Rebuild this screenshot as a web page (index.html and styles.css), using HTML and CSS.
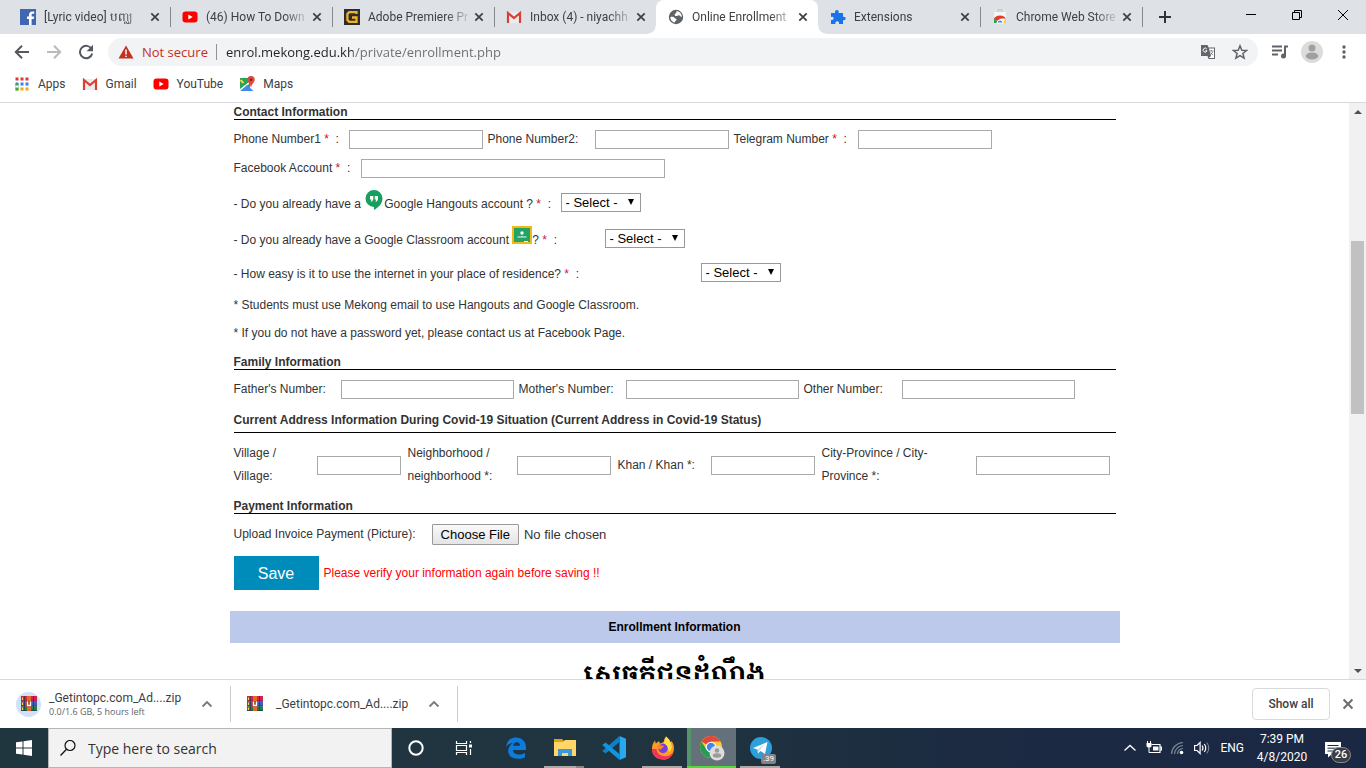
FILE: index.html
```html
<!DOCTYPE html>
<html lang="en">
<head>
<meta charset="utf-8">
<meta name="viewport" content="width=device-width, initial-scale=1">
<title>Online Enrollment</title>
<link rel="stylesheet" href="styles.css">
</head>
<body>
<svg class="sprite" aria-hidden="true">
  <symbol id="x" viewBox="0 0 10 10"><path d="M1.300 1.300 8.700 8.700M8.700 1.300 1.300 8.700" stroke="currentColor" stroke-width="1.700" fill="none"/></symbol>
  <symbol id="play" viewBox="0 0 16 16"><rect x=".5" y="2.500" width="15" height="11" rx="3" fill="#f00"/><path d="M6.300 5.500v5l4.400-2.500z" fill="#fff"/></symbol>
  <symbol id="mail" viewBox="0 0 16 16"><path d="M1 3h14v11H1z" fill="#ececec"/><path d="M2 14V4l6 5 6-5v10" fill="none" stroke="#d93f32" stroke-width="2.200"/></symbol>
  <symbol id="up" viewBox="0 0 12 12"><path d="M1.500 8.500 6 4l4.500 4.500" fill="none" stroke="currentColor" stroke-width="1.800"/></symbol>
  <symbol id="rar" viewBox="0 0 16 16"><path d="M0 0h16v5.500H0z" fill="#d8204f"/><path d="M0 5.500h16v5H0z" fill="#4a58bd"/><path d="M0 10.500h16V15H0z" fill="#128a3e"/><path d="M0 5h16M0 10h16M0 14.500h16" stroke="#353050" stroke-width=".7"/><path d="M3.500 0v15M12.500 0v15" stroke="#332c3c" stroke-width=".7"/><path d="M1.500 1.500v2.500M1.500 6.500v2.500M1.500 11.500v2.500" stroke="#f4da45"/><path d="M6 0h4v15H6z" fill="#df6a25"/><path d="M5 5h6v6H5z" fill="#a9412a"/><path d="M6.500 5.500v4h3v-4" stroke="#fff" stroke-width="1.300" fill="none"/></symbol>
</svg>

<header class="tabs">
  <div class="tab"><svg class="i16" viewBox="0 0 16 16"><path fill="#4267b2" d="M0 0h16v16H0z"/><path fill="#fff" d="M9 16V10H7V7.500h2V6c0-2.300 1.300-3.500 3.400-3.500h1.800v2.300h-1.300c-1 0-1.300.5-1.300 1.300v1.400h2.500L13.700 10h-2.100v6z"/></svg><span class="title">[Lyric video] បញ្ឈ</span><button class="close" aria-label="Close tab"><svg><use href="#x"/></svg></button></div>
  <div class="tab"><svg class="i16"><use href="#play"/></svg><span class="title">(46) How To Down</span><button class="close" aria-label="Close tab"><svg><use href="#x"/></svg></button></div>
  <div class="tab"><svg class="i16" viewBox="0 0 16 16"><path fill="#2e2d2c" d="M0 0h16v16H0z"/><path d="M12.500 5V3.200H5.200L3.400 5v6l1.800 1.900h7.300V8.500H8" fill="none" stroke="#efb229" stroke-width="2.300"/></svg><span class="title">Adobe Premiere Pr</span><button class="close" aria-label="Close tab"><svg><use href="#x"/></svg></button></div>
  <div class="tab plain"><svg class="i16"><use href="#mail"/></svg><span class="title">Inbox (4) - niyachh</span><button class="close" aria-label="Close tab"><svg><use href="#x"/></svg></button></div>
  <div class="tab active"><svg class="i16" viewBox="0 0 16 16"><circle cx="8" cy="8" r="7.200" fill="#5f6368"/><path d="M8.500 2.300C11.700 2.300 14 5 13.700 8c-1.200 0-1.500-1.800-3-1.800-1 0-1.500.8-2.700.8-1.500 0-2-1.500-.8-2.200 1-.6 1.300-1 1.300-2.500zM2.400 8c1.800-.5 3.600 0 4.400 1 .8.900 2 .8 1.700 2-.3 1-1.800 1-1.600 2.500C4.200 13.200 2.300 10.800 2.400 8z" fill="#fff"/></svg><span class="title">Online Enrollment</span><button class="close" aria-label="Close tab"><svg><use href="#x"/></svg></button></div>
  <div class="tab"><svg class="i16" viewBox="0 0 16 16"><path fill="#1a73e8" d="M1 4h4.200C4.500 2 5.600 1 6.900 1s2.300 1 1.700 3H13v4c1.800-.5 2.600.5 2.600 1.600S14.800 11.700 13 11.200V15H9c.4-1.800-.5-2.700-1.800-2.700S5 13.200 5.400 15H1v-4c1.700.3 2.600-.5 2.600-1.700S2.700 7.500 1 8z"/></svg><span class="title">Extensions</span><button class="close" aria-label="Close tab"><svg><use href="#x"/></svg></button></div>
  <div class="tab"><svg class="i16" viewBox="0 0 16 16"><path d="M6 3V1h4v2" fill="none" stroke="#c5c8cc" stroke-width="1.300"/><path fill="#f5f5f5" d="M2 3h12v11H2z"/><path d="M2 14V8.500L5 12v2z" fill="#25a65a"/><path d="M14 14V8.500L11 14z" fill="#fdd22e"/><path d="M2.200 9.500C4 5.500 12 5.500 13.800 9.500H9L5 12z" fill="#e33b2e"/><path d="M5 14a3 3 0 0 1 6 0z" fill="#4688f1" stroke="#fff"/></svg><span class="title">Chrome Web Store</span><button class="close" aria-label="Close tab"><svg><use href="#x"/></svg></button></div>
  <button class="newtab" aria-label="New tab"><svg viewBox="0 0 12 12"><path d="M6 0v12M0 6h12" stroke="#303336" stroke-width="2"/></svg></button>
  <div class="winbtns">
    <button aria-label="Minimize"><svg viewBox="0 0 10 10"><path d="M0 4.500h10" stroke="#000"/></svg></button>
    <button aria-label="Restore"><svg viewBox="0 0 10 10"><path d="M.5 2.500h7v7h-7zM2.500 2.500v-2h7v7h-2" fill="none" stroke="#000"/></svg></button>
    <button aria-label="Close"><svg viewBox="0 0 10 10"><path d="m0 0 10 10M10 0 0 10" stroke="#000"/></svg></button>
  </div>
</header>

<nav class="toolbar">
  <button class="tool" aria-label="Back"><svg viewBox="0 0 16 16"><path d="M15 8H2.500M8 1.800 1.800 8 8 14.200" fill="none" stroke="#55585c" stroke-width="2"/></svg></button>
  <button class="tool" aria-label="Forward"><svg viewBox="0 0 16 16"><path d="M1 8h12.500M8 1.800 14.200 8 8 14.200" fill="none" stroke="#b9bbbe" stroke-width="2"/></svg></button>
  <button class="tool" aria-label="Reload"><svg viewBox="0 0 16 16"><path d="M13.600 5A6.200 6.200 0 1 0 14.200 9.500" fill="none" stroke="#55585c" stroke-width="2"/><path d="M15 .8v6.400H8.600z" fill="#55585c"/></svg></button>
  <div class="omnibox">
    <svg class="warn" viewBox="0 0 15 14"><path d="M7.500.5 15 13.500H0z" fill="#c5301f"/><path d="M7.500 4.500v5M7.500 10.800v1.300" stroke="#fff" stroke-width="1.500"/></svg>
    <span class="insecure">Not secure</span>
    <input class="url" aria-label="Address" value="enrol.mekong.edu.kh/private/enrollment.php">
    <button class="tool" aria-label="Translate"><svg viewBox="0 0 16 16"><path d="M1 1h6.500l1 2.500h6.500V15H8.500l-1-3H1z" fill="#62666a"/><path d="M9 4.500h5V14H8.800l2.200-2z" fill="#fff"/><path d="M9.500 7h4M11.500 6v1M12.800 7.500c-.5 1.500-1.500 2.600-2.700 3.400M10.600 8.500l2.400 2.700" stroke="#777" fill="none" stroke-width=".8"/><path d="M6.800 5A2 2 0 1 0 7 6.800H5.300" fill="none" stroke="#fff"/></svg></button>
    <button class="tool" aria-label="Bookmark"><svg viewBox="0 0 16 16"><path d="m8 1.800 1.800 4.400 4.700.3-3.600 3 1.200 4.600L8 11.600l-4.100 2.500 1.200-4.600-3.600-3 4.700-.3z" fill="none" stroke="#5f6368" stroke-width="1.500"/></svg></button>
  </div>
  <button class="tool" aria-label="Playlist"><svg viewBox="0 0 16 16"><path d="M0 2.500h10M0 6.500h10M0 10.500h6M16 2.500h-3v9" fill="none" stroke="#5f6368" stroke-width="2"/><circle cx="11.500" cy="12" r="2.500" fill="#5f6368"/></svg></button>
  <button class="tool" aria-label="Profile"><svg class="avatar" viewBox="0 0 22 22"><circle cx="11" cy="11" r="11" fill="#dcdcdc"/><circle cx="11" cy="7" r="3.500" fill="#a0a0a0"/><ellipse cx="11" cy="15" rx="6.300" ry="3.500" fill="#a0a0a0"/></svg></button>
  <button class="tool" aria-label="Menu"><svg viewBox="0 0 16 16"><g fill="#5f6368"><circle cx="8" cy="3" r="1.700"/><circle cx="8" cy="8" r="1.700"/><circle cx="8" cy="13" r="1.700"/></g></svg></button>
</nav>

<nav class="bookmarks">
  <a href="#"><svg class="i16" viewBox="0 0 16 16"><path d="M1.500 3h13" stroke="#e0372b" stroke-width="3" stroke-dasharray="3 2"/><path d="M1.500 8h13" stroke="#3f7fe8" stroke-width="3" stroke-dasharray="3 2"/><path d="M1.500 13h13" stroke="#f0a912" stroke-width="3" stroke-dasharray="3 2"/><path d="M1.500 8h3v6.500h-3z" fill="#35a853"/><path d="M1.500 9.500h3v2h-3z" fill="#fff"/></svg>Apps</a>
  <a href="#"><svg class="i16"><use href="#mail"/></svg>Gmail</a>
  <a href="#"><svg class="i16"><use href="#play"/></svg>YouTube</a>
  <a href="#"><svg class="i16" viewBox="0 0 16 16"><path d="M1 2h10v13H1z" fill="#28a45a"/><path d="M1 13V15l9-7V6z" fill="#fff"/><path d="m2 15 6-6 6.500 6z" fill="#4688f1"/><path d="m1.500 4 3 3" stroke="#fbd13e" stroke-width="2"/><path d="M12 0a3.700 3.700 0 0 1 3.700 3.700C15.700 6.500 12.500 7.500 12 12c-.5-4.500-3.700-5.500-3.700-8.300A3.700 3.700 0 0 1 12 0z" fill="#df4a3d"/><circle cx="12" cy="3.800" r="1.300" fill="#7e2920"/></svg>Maps</a>
</nav>

<div class="viewport">
  <main class="page">
    <form class="form">
      <h2>Contact Information</h2>
      <div class="row">
        <label class="w110" for="p1">Phone Number1 <i>*</i>&nbsp; :</label><input id="p1" class="f134" type="text">
        <label class="w102" for="p2">Phone Number2:</label><input id="p2" class="f134" type="text">
        <label class="w119" for="tg">Telegram Number <i>*</i>&nbsp; :</label><input id="tg" class="f134" type="text">
      </div>
      <div class="row">
        <label class="w122" for="fb">Facebook Account <i>*</i>&nbsp; :</label><input id="fb" class="f304" type="text">
      </div>
      <div class="ask first">
        <label class="w322" for="s1">- Do you already have a <svg class="brand" viewBox="0 0 20 20"><path d="M10 0a8.500 8.500 0 0 1 8.500 8.500c0 5-4 9-8.500 11.500v-3A8.500 8.500 0 0 1 10 0z" fill="#17a05d"/><path d="M6 6h3.300v3.500L8 11.500H6.700l.8-2H6zM10.800 6H14v3.500l-1.200 2h-1.300l.7-2h-1.400z" fill="#fff"/></svg>Google Hangouts account ? <i>*</i>&nbsp; :</label>
        <span class="pick"><select id="s1"><option>- Select -</option></select></span>
      </div>
      <div class="ask second">
        <label class="w366" for="s2">- Do you already have a Google Classroom account <svg class="brand" viewBox="0 0 20 20"><path d="M0 0h20v18H0z" fill="#f4b814"/><path d="M2 2h16v14H2z" fill="#21a465"/><circle cx="10" cy="7" r="1.700" fill="#fff"/><path d="M5 11.500c1-1.500 2-1.500 3-.8 1-.8 3-.8 4 0 1-.7 2-.7 3 .8z" fill="#d9f1e4"/><path d="M12 15h4v1h-4z" fill="#fff"/></svg>? <i class="pink">*</i>&nbsp; :</label>
        <span class="pick"><select id="s2"><option>- Select -</option></select></span>
      </div>
      <div class="ask">
        <label class="w462" for="s3">- How easy is it to use the internet in your place of residence? <i class="pink">*</i>&nbsp; :</label>
        <span class="pick"><select id="s3"><option>- Select -</option></select></span>
      </div>
      <p>* Students must use Mekong email to use Hangouts and Google Classroom.</p>
      <p>* If you do not have a password yet, please contact us at Facebook Page.</p>
      <h2>Family Information</h2>
      <div class="row">
        <label class="w102" for="fa">Father's Number:</label><input id="fa" class="f173" type="text">
        <label class="w102" for="mo">Mother's Number:</label><input id="mo" class="f173" type="text">
        <label class="w93" for="ot">Other Number:</label><input id="ot" class="f173" type="text">
      </div>
      <h2 class="roomy">Current Address Information During Covid-19 Situation (Current Address in Covid-19 Status)</h2>
      <div class="address">
        <label for="vi">Village / Village:</label><input id="vi" type="text">
        <label for="ne">Neighborhood / neighborhood *:</label><input id="ne" type="text">
        <label for="kh">Khan / Khan *:</label><input id="kh" type="text">
        <label for="ci">City-Province / City-Province *:</label><input id="ci" type="text">
      </div>
      <h2>Payment Information</h2>
      <div class="row upload">
        <label for="up">Upload Invoice Payment (Picture):</label><input id="up" type="file">
      </div>
      <div class="row submit">
        <button class="save" type="button">Save</button><span class="alert">Please verify your information again before saving !!</span>
      </div>
    </form>
    <h3 class="band">Enrollment Information</h3>
    <div class="khmer" lang="km">សេចក្តីជូនដំណឹង</div>
  </main>
  <div class="scroll"><span class="arrow top"></span><span class="before"></span><span class="thumb"></span><span class="after"></span><span class="arrow bottom"></span></div>
</div>

<section class="downloads">
  <div class="item"><span class="ring"><svg class="i16"><use href="#rar"/></svg></span><div class="file">_Getintopc.com_Ad....zip<small>0.0/1.6 GB, 5 hours left</small></div><button aria-label="Options"><svg><use href="#up"/></svg></button></div>
  <div class="item"><svg class="i16"><use href="#rar"/></svg><div class="file">_Getintopc.com_Ad....zip</div><button aria-label="Options"><svg><use href="#up"/></svg></button></div>
  <button class="showall">Show all</button>
  <button class="shut" aria-label="Close downloads"><svg><use href="#x"/></svg></button>
</section>

<footer class="taskbar">
  <button class="start" aria-label="Start"><svg class="i16" viewBox="0 0 16 16"><path d="M0 2.300 6.500 1.400v6.100H0zM7.500 1.200 16 0v7.500H7.500zM0 8.500h6.500v6.100L0 13.700zM7.500 8.500H16V16l-8.500-1.200z" fill="#fff"/></svg></button>
  <label class="search"><svg class="i16" viewBox="0 0 16 16"><circle cx="10" cy="5.500" r="5" fill="none" stroke="#111" stroke-width="1.200"/><path d="M6.500 9.300.5 15.500" stroke="#111" stroke-width="1.300"/></svg><input aria-label="Search" placeholder="Type here to search"></label>
  <button class="sys" aria-label="Cortana"><svg viewBox="0 0 20 20"><circle cx="10" cy="10" r="6.700" fill="none" stroke="#fff" stroke-width="2"/></svg></button>
  <button class="sys" aria-label="Task view"><svg viewBox="0 0 20 20"><path d="M2.500 3v2.500h10V3M2.500 17v-2.500h10V17M2.500 7.500h10v5h-10zM16.500 3v2M16.500 11v6" fill="none" stroke="#fff" stroke-width="1.200"/><path d="M15 6.500h3v3h-3z" fill="#fff"/></svg></button>
  <button class="app" aria-label="Edge"><svg viewBox="0 0 24 24"><path d="M2 11C3 4 7 1.500 12 1.500c6.500 0 10 4.500 10 10V14H9c.2 3.400 3 4.500 6.200 4.500 2.400 0 4.300-.6 5.800-1.500v4.300c-2 1-4.300 1.500-7 1.500-6 0-9.800-3-9.800-8 0-3.500 1.900-6.200 4.800-7.800C5.500 7.500 3.300 9 2 11zm7.200-1.200H16c0-2.400-1.100-3.600-3.200-3.600-2 0-3.300 1.500-3.600 3.600z" fill="#0b7bdd"/></svg></button>
  <button class="app open stack" aria-label="File Explorer"><svg viewBox="0 0 24 24"><path d="M1 3h8l2 2h12v5H1z" fill="#e2a10d"/><path d="M1 6h9l2-2h11v16H1z" fill="#ffd667"/><path d="M5 20v-7h14v7h-4v-3H9v3z" fill="#3a96dd"/></svg></button>
  <button class="app" aria-label="Visual Studio Code"><svg viewBox="0 0 24 24"><path d="M17.500 0 24 2.800v18.400L17.500 24z" fill="#27a9f2"/><path d="M17.500 0v6L3.600 17.600.2 15z" fill="#0f7fc8"/><path d="M.2 9 3.600 6.400 17.500 18v6z" fill="#1693dd"/></svg></button>
  <button class="app open" aria-label="Firefox"><svg viewBox="0 0 24 24"><path d="M15 .5c2 2 3.500 3 4.300 5.500l1.500-.8c2 3 2.500 5.500 2 9C22 20 17.700 23.500 12 23.500S1 19.500 1 13c0-3.500 1-6.500 3-8.500l.8 3L8 5l1 2.500c2-1 4.500-1 4-4z" fill="#ff9a22"/><path d="M15 .5c2 2 3.500 3 4.300 5.500 2 3 2 8-1.300 10-1-6-4-7-5-9z" fill="#ffe04a"/><path d="M1 13c0 6.500 5.300 10.500 11 10.500 5 0 9-2.500 10.400-7.500-3 4-8 5-12 3.500-3-1.200-4.500-3.500-5-6.500z" fill="#f6315b"/><circle cx="12" cy="12.500" r="4.700" fill="#7540d9"/><path d="M6 10c3-1.500 5 0 7 0-.5 2-2.500 1.500-3 3.500-2 .5-4-1.500-4-3.500z" fill="#ff812f"/></svg></button>
  <button class="app open current" aria-label="Chrome"><svg viewBox="0 0 26 26"><circle cx="12" cy="12" r="11" fill="#fcc934"/><path d="M12 12 2.500 6.500A11 11 0 0 1 21.500 6.500H12z" fill="#e0483c"/><path d="M2.500 6.500A11 11 0 0 0 12 23l4.500-8.500L12 12 7.300 14.500z" fill="#249c54"/><circle cx="12" cy="12" r="5.300" fill="#fff"/><circle cx="12" cy="12" r="4.200" fill="#4385f1"/><circle cx="18" cy="18" r="7.500" fill="#dedede"/><circle cx="18" cy="15.500" r="2.300" fill="#9b9b9b"/><ellipse cx="18" cy="20.500" rx="4.200" ry="2.200" fill="#9b9b9b"/></svg></button>
  <button class="app open" aria-label="Telegram"><svg viewBox="0 0 24 24"><circle cx="12" cy="12" r="11" fill="#2ba0da"/><path d="m4 12 14.500-6L16 18l-4.500-3-2.500 2.500-.5-4z" fill="#fff"/><path d="m8.500 13.500 8-6-6 7-1.500 3z" fill="#c8daea"/></svg><span class="count">.39</span></button>
  <div class="tray">
    <svg class="i16" viewBox="0 0 16 16"><path d="m2.500 10.500 5.500-5 5.500 5" fill="none" stroke="#fff" stroke-width="1.300"/></svg>
    <svg class="i16" viewBox="0 0 16 16"><path d="M5.500 4.500h8.500v8H4.500M14.500 7h1v3h-1" fill="none" stroke="#fff" stroke-width="1.200"/><path d="M7 6.500h5.500v4H7zM.5 3h5v3.500l-1.500 1H2l-1.500-1z" fill="#fff"/><path d="M1.500 1v2M4.500 1v2M3 7v5.500h2" stroke="#fff" fill="none"/></svg>
    <svg class="i16" viewBox="0 0 16 16"><g fill="none" stroke="#7d8794" stroke-width="1.200"><path d="M1.500 14A12 12 0 0 1 13 2.500M4.500 14A9 9 0 0 1 13 5.500M7.500 14A6 6 0 0 1 13 8.500"/></g><circle cx="11.500" cy="12.500" r="1.800" fill="#fff"/></svg>
    <svg class="i16" viewBox="0 0 16 16"><path d="M.6 5.500h2.500l3-3v11l-3-3H.6zM8 5.500q2 2.500 0 5M10.300 4q3 4 0 8" fill="none" stroke="#fff" stroke-width="1.200"/><path d="M12.800 2.500q4 5.500 0 11" fill="none" stroke="#8992a0"/></svg>
    <span class="lang">ENG</span>
    <div class="clock">7:39 PM<br>4/8/2020</div>
    <button class="notes" aria-label="Notifications"><svg viewBox="0 0 18 18"><path d="M1 1h16v12H8l-4 3.500V13H1z" fill="#fff"/><path d="M3.500 4.500h11M3.500 7.200h11M3.500 10h8" stroke="#1c2a42"/></svg><span>26</span></button>
  </div>
</footer>
</body>
</html>
```

FILE: styles.css
```css
* { box-sizing: border-box; }
body {
  margin: 0;
  height: 100vh;
  display: flex;
  flex-direction: column;
  overflow: hidden;
  background: #fff;
  font: 12px/16px Roboto, "Noto Sans", sans-serif;
  color: #3c4043;
}
button { border: 0; padding: 0; background: none; font: inherit; color: inherit; }
input { min-width: 0; }
svg { flex: none; }
.sprite { position: absolute; width: 0; height: 0; }
.i16 { width: 16px; height: 16px; }

/* Tab strip */
.tabs { display: flex; flex: none; height: 34px; padding-left: 8px; background: #dee1e6; }
.tab {
  position: relative;
  display: flex;
  align-items: center;
  flex: 0 1 162px;
  min-width: 0;
  padding: 0 7px 0 12px;
}
.tab::after {
  content: "";
  position: absolute;
  right: -1px;
  top: 7px;
  height: 20px;
  border-right: 1px solid #85888c;
}
.tab.plain::after { display: none; }
.title {
  flex: 1;
  margin: 0 3px 0 8px;
  overflow: hidden;
  white-space: nowrap;
  -webkit-mask-image: linear-gradient(90deg, #000 78px, transparent 104px);
  mask-image: linear-gradient(90deg, #000 78px, transparent 104px);
}
.close { display: flex; padding: 3px; }
.close svg { width: 10px; height: 10px; }
.tab.active { background: #fff; border-radius: 8px 8px 0 0; }
.tab.active::before, .tab.active::after {
  content: "";
  position: absolute;
  top: auto;
  bottom: 0;
  width: 8px;
  height: 8px;
  border: 0;
}
.tab.active::before { left: -8px; background: radial-gradient(circle at 0 0, #dee1e6 7px, #fff 8px); }
.tab.active::after { right: -8px; background: radial-gradient(circle at 100% 0, #dee1e6 7px, #fff 8px); }
.newtab { width: 46px; display: grid; place-items: center; }
.newtab svg { width: 12px; height: 12px; }
.winbtns { display: flex; margin-left: auto; height: 29px; }
.winbtns button { width: 46px; display: grid; place-items: center; }
.winbtns svg { width: 10px; height: 10px; }

/* Toolbar */
.toolbar { display: flex; flex: none; align-items: center; gap: 4px; height: 36px; padding: 0 8px; }
.tool { width: 28px; height: 28px; display: grid; place-items: center; }
.tool svg { width: 16px; height: 16px; }
.tool .avatar { width: 22px; height: 22px; }
.omnibox {
  flex: 1;
  display: flex;
  align-items: center;
  gap: 4px;
  height: 28px;
  margin: 0 4px;
  padding: 0 4px 0 10px;
  border-radius: 14px;
  background: #f1f3f4;
  font: 13px/16px "Open Sans", "Noto Sans", sans-serif;
}
.warn { width: 16px; height: 14px; }
.insecure { margin-left: 4px; padding-right: 8px; border-right: 1px solid #909396; color: #c5301f; white-space: nowrap; }
.url {
  flex: 1;
  height: 22px;
  border: 0;
  padding: 0 0 0 5px;
  font: inherit;
  color: transparent;
  background: linear-gradient(90deg, #202124 132px, #696d71 132px);
  -webkit-background-clip: text;
  background-clip: text;
}
.bookmarks { display: flex; flex: none; align-items: center; gap: 16px; height: 33px; padding: 0 14px 5px; border-bottom: 1px solid #d8d9dc; }
.bookmarks a { display: flex; align-items: center; gap: 8px; color: inherit; text-decoration: none; }

/* Page */
.viewport { flex: 1; min-height: 0; display: flex; overflow: hidden; font-family: "Liberation Sans", Arial, sans-serif; color: #333; }
.page { width: 100%; max-width: 890px; margin: 0 auto; }
.form { padding: 1px 4px 0; }
h2 { margin: 0; padding-top: 2px; border-bottom: 1px solid #000; font-size: 12px; line-height: 13px; }
.row { display: flex; align-items: center; gap: 5px; padding: 10px 0 9px; line-height: 19px; }
.row + .row { padding-top: 1px; }
input[type="text"] { height: 19px; border: 1px solid #a9a9a9; background: #fff; }
i { color: #c8141e; font-style: normal; }
.pink { color: #c2185b; }
.w93 { width: 93px; }
.w102 { width: 102px; }
.w110 { width: 110px; }
.w119 { width: 119px; }
.w122 { width: 122px; }
.w322 { width: 322px; }
.w366 { width: 366px; }
.w462 { width: 462px; }
.f134 { width: 134px; }
.f173 { width: 173px; }
.f304 { width: 304px; }
.ask { display: flex; align-items: end; gap: 5px; height: 34px; padding-bottom: 6px; white-space: nowrap; }
.ask.first { height: 31px; }
.ask.second { height: 36px; }
.brand { width: 20px; height: 20px; vertical-align: -2px; }
.pick { position: relative; display: block; height: 19px; }
.pick::after {
  content: "";
  position: absolute;
  right: 7px;
  top: 6px;
  border: solid transparent;
  border-width: 6px 3px 0;
  border-top-color: #000;
}
select {
  appearance: none;
  width: 80px;
  height: 19px;
  padding: 0 4px;
  border: 1px solid #999;
  border-radius: 0;
  background: #fff;
  font: 13px/17px "Liberation Sans", Arial, sans-serif;
  color: #000;
}
p { margin: 0; line-height: 28px; }
p:nth-last-of-type(2) { padding-top: 3px; }
p:last-of-type { padding-bottom: 7px; }
.roomy { padding-top: 0; line-height: 24px; }
.address {
  display: grid;
  grid-template-columns: 76px 84px 102px 94px 86px 104px 147px 134px;
  column-gap: 7px;
  align-items: center;
  padding: 9px 0 10px;
  line-height: 23px;
}
.upload { gap: 16px; padding-bottom: 11px; line-height: 21px; }
input[type="file"] { font-size: 13px; color: #333; }
input[type="file"]::file-selector-button {
  height: 21px;
  margin-right: 5px;
  padding: 0 8px;
  border: 1px solid #999;
  border-radius: 1px;
  background: linear-gradient(#fafafa, #e4e4e4);
  font: 13px "Liberation Sans", Arial, sans-serif;
}
.save { width: 85px; height: 34px; background: #008cba; color: #fff; font-size: 16px; }
.alert { color: #f00; }
.row.submit { padding: 0 0 21px; }
.band { margin: 0; background: #bdc9ea; color: #000; font-size: 12px; line-height: 32px; text-align: center; }
.khmer { padding-top: 14px; font: bold 26px/34px "Khmer OS Muol", "Noto Serif Khmer", sans-serif; text-align: center; color: #000; white-space: nowrap; }

.scroll { flex: none; width: 17px; display: flex; flex-direction: column; align-items: center; background: #f1f1f1; }
.arrow { height: 17px; display: grid; place-items: center; }
.arrow::before { content: ""; border: 4px solid transparent; }
.top::before { border-bottom-color: #505050; border-top: 0; }
.bottom::before { border-top-color: #505050; border-bottom: 0; }
.before { flex: 121; }
.thumb { flex: 174; width: 13px; background: #c1c1c1; }
.after { flex: 248; }

/* Download shelf */
.downloads { display: flex; flex: none; align-items: center; height: 49px; padding-right: 12px; border-top: 1px solid #d8d9dc; }
.item { display: flex; align-items: center; height: 36px; padding-left: 16px; border-right: 1px solid #ccc; }
.item > .i16 { margin-right: 5px; }
.ring { display: grid; place-items: center; width: 25px; height: 25px; border-radius: 50%; background: #d0e1fa; }
.file { margin-left: 8px; width: 144px; line-height: 15px; white-space: nowrap; }
.file small { display: block; font: 9px/12px "Open Sans", sans-serif; color: #5f6368; }
.item button { width: 37px; padding: 0 8px; display: flex; color: #77797c; }
.item button svg { width: 12px; height: 12px; }
.showall { width: 78px; height: 32px; margin: 0 12px 0 auto; border: 1px solid #d8dade; border-radius: 4px; font-weight: 500; }
.shut { display: flex; color: #6b6e72; }
.shut svg { width: 12px; height: 12px; }

/* Taskbar */
.taskbar { display: flex; flex: none; height: 40px; background: linear-gradient(90deg, #20363f, #20343f 50%, #1b2942 75%, #1b2844); color: #fff; }
.start { width: 48px; display: grid; place-items: center; }
.search { flex: 0 1 344px; display: flex; align-items: center; gap: 12px; padding: 0 11px; border: 1px solid #b5b5b5; background: #f2f2f2; }
.search input { flex: 1; border: 0; padding: 0; background: none; font: 14px "Open Sans", sans-serif; }
.search input::placeholder { color: #333; opacity: 1; }
.sys { width: 48px; display: grid; place-items: center; }
.sys svg { width: 20px; height: 20px; }
.app { position: relative; width: 49px; display: grid; place-items: center; }
.sys + .app { margin-left: 3px; }
.app svg { width: 24px; height: 24px; }
.open::after { content: ""; position: absolute; left: 4px; right: 5px; bottom: 0; height: 2px; background: #aaa9a6; }
.stack::after { border-right: 8px solid #858583; }
.current { background: linear-gradient(90deg, #569569 4px, #64717a 4px); }
.current::after { left: 0; right: 0; background: #4ddc37; }
.current svg { width: 26px; height: 26px; }
.count { position: absolute; right: 9px; bottom: 4px; padding: 0 2px; border-radius: 2px; background: #7d8388; font-size: 8px; line-height: 10px; }
.tray { display: flex; align-items: center; gap: 8px; margin-left: auto; padding-right: 14px; }
.lang { margin-left: 2px; }
.clock { width: 60px; text-align: center; line-height: 18px; }
.notes { position: relative; width: 28px; height: 28px; margin-left: 4px; }
.notes svg { display: block; width: 18px; height: 18px; margin-top: 4px; }
.notes span { position: absolute; right: 1px; bottom: -1px; width: 20px; border: 1px solid #888; border-radius: 8px; background: #383d45; font-size: 11px; line-height: 14px; font-weight: 500; }
```
